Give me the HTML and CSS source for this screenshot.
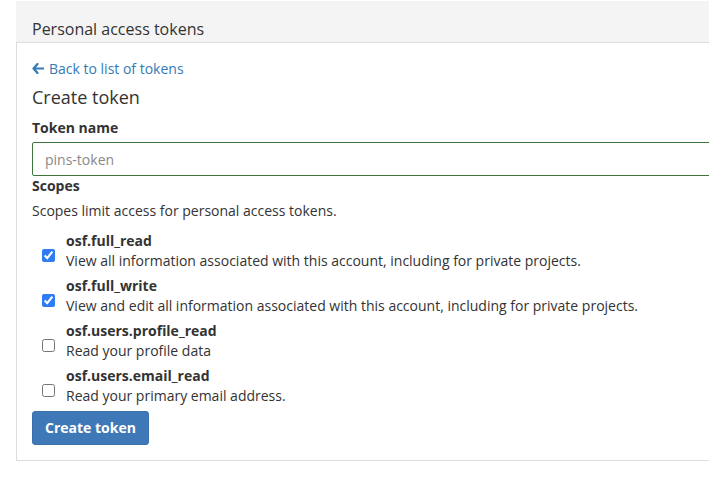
FILE: index.html
```html
<!DOCTYPE html>
<html>
<head>
<meta charset="utf-8">
<link rel="stylesheet" href="styles.css">
</head>
<body>
<div class="page">
  <div class="panel">
    <div class="panel-heading">Personal access tokens</div>
    <div class="panel-body">
      <a class="back-link" href="#"><svg class="arrow" width="12" height="11" viewBox="0 0 12 11"><path d="M5.5 1 L1.5 5.5 L5.5 10 M1.5 5.5 H11.5" fill="none" stroke="#337ab7" stroke-width="2.2" stroke-linecap="round" stroke-linejoin="round"/></svg>Back to list of tokens</a>
      <h3 class="title">Create token</h3>
      <label class="field-label">Token name</label>
      <input class="text-input" type="text" placeholder="pins-token">
      <label class="field-label scopes-label">Scopes</label>
      <p class="help">Scopes limit access for personal access tokens.</p>
      <div class="scope">
        <input class="check" type="checkbox" checked>
        <div class="scope-text">
          <div class="scope-name">osf.full_read</div>
          <div class="scope-desc">View all information associated with this account, including for private projects.</div>
        </div>
      </div>
      <div class="scope">
        <input class="check" type="checkbox" checked>
        <div class="scope-text">
          <div class="scope-name">osf.full_write</div>
          <div class="scope-desc">View and edit all information associated with this account, including for private projects.</div>
        </div>
      </div>
      <div class="scope">
        <input class="check" type="checkbox">
        <div class="scope-text">
          <div class="scope-name">osf.users.profile_read</div>
          <div class="scope-desc">Read your profile data</div>
        </div>
      </div>
      <div class="scope">
        <input class="check" type="checkbox">
        <div class="scope-text">
          <div class="scope-name">osf.users.email_read</div>
          <div class="scope-desc">Read your primary email address.</div>
        </div>
      </div>
      <button class="btn" type="button">Create token</button>
    </div>
  </div>
</div>
</body>
</html>
```

FILE: styles.css
```css
html, body {
  margin: 0;
  padding: 0;
  background: #fff;
  overflow: hidden;
}
body {
  font-family: "Open Sans", "Liberation Sans", sans-serif;
  font-size: 14px;
  line-height: 20px;
  color: #333;
}
.page {
  padding: 1px 0 0 16px;
}
.panel {
  width: 720px;
  box-shadow: 0 1px 1px rgba(0,0,0,0.05);
}
.panel-heading {
  background: #f4f4f4;
  border-bottom: 1px solid #ddd;
  padding: 17px 16px 2px 16px;
  font-size: 16px;
  line-height: 22px;
  color: #333;
}
.panel-body {
  border-left: 1px solid #ddd;
  border-bottom: 1px solid #ddd;
  padding: 16px 15px 15px 15px;
}
.back-link {
  display: flex;
  align-items: center;
  gap: 5px;
  color: #337ab7;
  text-decoration: none;
  line-height: 20px;
}
.arrow {
  display: block;
  margin-top: -1px;
}
.title {
  margin: 8px 0 11px 0;
  font-size: 18px;
  line-height: 20px;
  font-weight: 400;
  color: #333;
}
.field-label {
  display: block;
  font-weight: 700;
  margin-bottom: 4px;
}
.scopes-label {
  margin-bottom: 5px;
}
.text-input {
  display: block;
  box-sizing: border-box;
  width: 700px;
  height: 34px;
  margin: 0;
  padding: 6px 12px;
  border: 1px solid #3c763d;
  border-radius: 2px;
  font-family: inherit;
  font-size: 14px;
  color: #555;
  outline: none;
}
.text-input::placeholder {
  color: #888;
}
.help {
  margin: 0 0 10px 0;
}
.scope {
  display: flex;
  align-items: center;
  margin-bottom: 5px;
}
.check {
  width: 13px;
  height: 13px;
  margin: 8px 11px 0 10px;
  accent-color: #2f7cf6;
  flex: none;
}
.scope-name {
  font-weight: 700;
}
.btn {
  display: block;
  margin: 0;
  padding: 7px 12px;
  background: #3f78b6;
  border: 1px solid #3a71ad;
  border-radius: 3px;
  color: #fff;
  font-family: inherit;
  font-size: 14px;
  font-weight: 700;
  line-height: 18px;
}
```
